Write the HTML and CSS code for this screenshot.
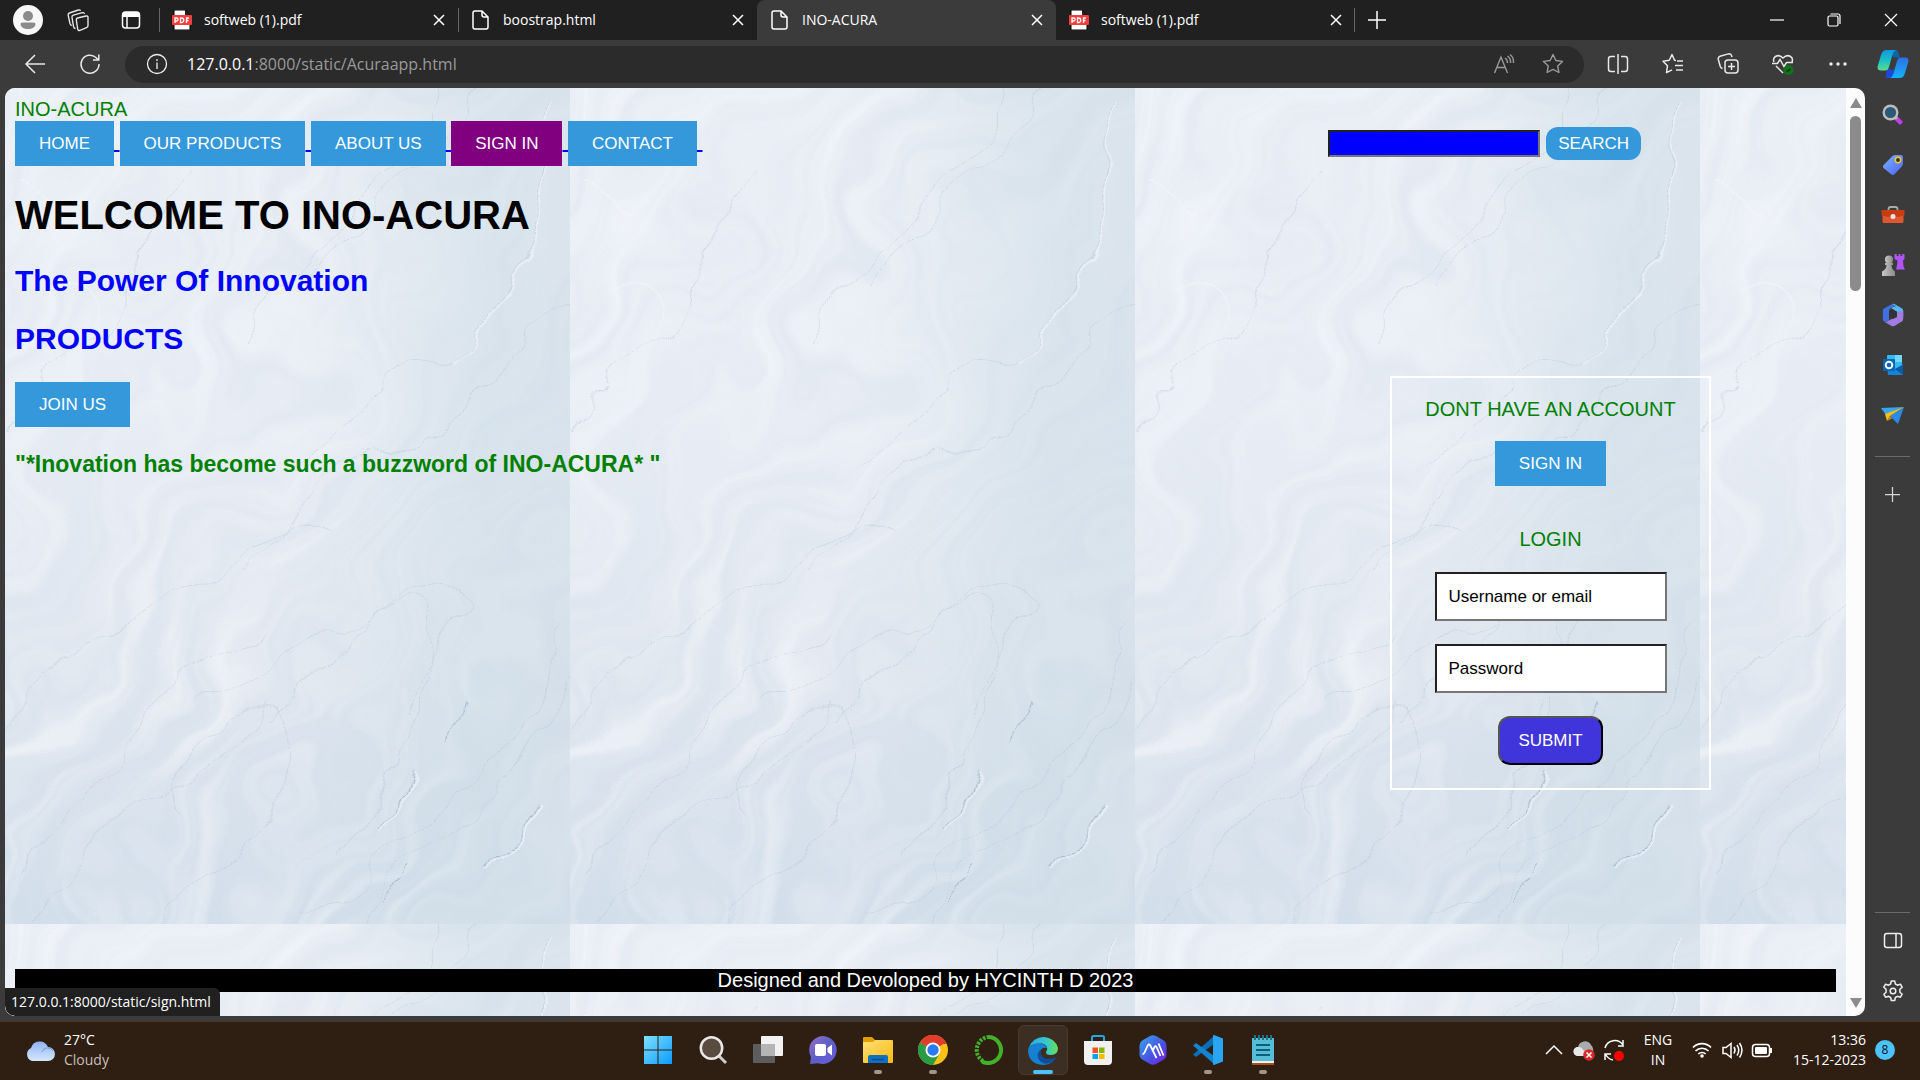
FILE: index.html
```html
<!DOCTYPE html>
<html lang="en">
<head>
<meta charset="utf-8">
<title>INO-ACURA</title>
<link rel="stylesheet" href="styles.css">
</head>
<body>
<svg class="defs" aria-hidden="true">
  <defs>
    <symbol id="i-x" viewBox="0 0 12 12"><path d="M1 1l10 10M11 1L1 11" fill="none" stroke="currentColor" stroke-width="1.5"/></symbol>
    <symbol id="i-plus" viewBox="0 0 18 18"><path d="M9 0v18M0 9h18" fill="none" stroke="currentColor" stroke-width="1.5"/></symbol>
    <symbol id="i-doc" viewBox="0 0 18 20"><path d="M3 1h7l6 6v10a2 2 0 0 1-2 2H3a2 2 0 0 1-2-2V3a2 2 0 0 1 2-2zM10 1v4a2 2 0 0 0 2 2h4" fill="none" stroke="#fff" stroke-width="1.5"/></symbol>
    <symbol id="i-pdf" viewBox="0 0 20 20"><path d="M2 0h11l5 5v15H2z" fill="#fff" stroke="#000"/><path d="M13 0v5h5z" fill="#222"/><rect y="5" width="20" height="10" rx="1" fill="#f33e3e"/><path d="M3 13V8h1.600a1.500 1.500 0 0 1 0 3H3M8.500 8h1a2.200 2.200 0 0 1 0 4.500h-1zM14.500 13V8H17M14.500 10.500h2" fill="none" stroke="#fff" stroke-width="1.300"/></symbol>
    <linearGradient id="g-cop1" x1="0" y1="0" x2="0" y2="1"><stop offset="0" stop-color="#1199dd"/><stop offset=".5" stop-color="#19bfc9"/><stop offset="1" stop-color="#5ddc8a"/></linearGradient>
    <linearGradient id="g-cop2" x1="0" y1="0" x2="0" y2="1"><stop offset="0" stop-color="#2f6fe0"/><stop offset="1" stop-color="#12b4ff"/></linearGradient>
    <linearGradient id="g-win" x1="0" y1="0" x2="1" y2="1"><stop offset="0" stop-color="#7fe0ff"/><stop offset="1" stop-color="#0a9bff"/></linearGradient>
    <linearGradient id="g-chat" x1="0" y1="0" x2="1" y2="1"><stop offset="0" stop-color="#9a6fc9"/><stop offset=".5" stop-color="#5b5fc7"/><stop offset="1" stop-color="#6b5be0"/></linearGradient>
    <linearGradient id="g-fold" x1="0" y1="0" x2="1" y2="1"><stop offset="0" stop-color="#ffe07a"/><stop offset="1" stop-color="#f9b80f"/></linearGradient>
    <linearGradient id="g-edge" x1="0" y1="0" x2="1" y2="0"><stop offset="0" stop-color="#2aa7e8"/><stop offset=".6" stop-color="#35c8d0"/><stop offset="1" stop-color="#6be04f"/></linearGradient>
    <linearGradient id="g-ai" x1="0" y1="0" x2="1" y2="1"><stop offset="0" stop-color="#35a6ee"/><stop offset=".6" stop-color="#4a4fe0"/><stop offset="1" stop-color="#7a1fe8"/></linearGradient>
    <linearGradient id="g-cloud" x1="0" y1="0" x2="0" y2="1"><stop offset="0" stop-color="#8fb4f2"/><stop offset="1" stop-color="#d6e6fc"/></linearGradient>
    <linearGradient id="g-tag" x1="0" y1="0" x2="1" y2="1"><stop offset="0" stop-color="#79b4ff"/><stop offset="1" stop-color="#5060ff"/></linearGradient>
    <linearGradient id="g-pawn" x1="0" y1="0" x2="1" y2="0"><stop offset="0" stop-color="#c8c8c8"/><stop offset="1" stop-color="#8a8a8a"/></linearGradient>
  </defs>
</svg>

<header class="tabstrip">
  <div class="strip-tools">
    <button class="icon-btn" aria-label="Profile"><svg width="30" height="30" viewBox="0 0 30 30"><circle cx="15" cy="15" r="15" fill="#f7f7f7"/><circle cx="15" cy="11" r="5" fill="#8b8b8b"/><path d="M7.500 19q0-1.500 2-1.500h11q2 0 2 1.500c0 3-3.500 5-7.500 5s-7.500-2-7.500-5z" fill="#8b8b8b"/></svg></button>
    <button class="icon-btn" aria-label="Workspaces"><svg width="22" height="24" viewBox="0 0 22 24" fill="none" stroke="#e6e6e6" stroke-width="1.400" stroke-linejoin="round"><path d="M10.500 10l8.500-2q2-.4 2 1.500v8q0 1.600-1.500 2.200L13 22.300q-2 .7-2.300-1.300L9.300 12q-.2-1.600 1.200-2z"/><path d="M8.500 20.500q-1.500 0-1.900-1.700L5 9.500Q4.700 7.700 6.400 7.200l8.800-2.500q2-.5 2.300 1.200"/><path d="M4.800 17.500q-1.300-.2-1.700-1.600L1.200 7.300Q.9 5.500 2.500 5l8.800-3q1.700-.5 2.200.8"/></svg></button>
    <button class="icon-btn" aria-label="Tab actions"><svg width="20" height="20" viewBox="0 0 20 20"><rect x="1.500" y="2" width="17" height="16" rx="3" fill="none" stroke="#fff" stroke-width="1.500"/><path d="M1.500 7V4.500Q1.500 2 4 2h12q2.500 0 2.500 2.500V7z" fill="#fff"/><path d="M6 7v11" stroke="#fff" stroke-width="1.500"/></svg></button>
  </div>
  <nav class="tabs" aria-label="Tabs">
    <div class="tab"><svg class="fav" width="20" height="20"><use href="#i-pdf"/></svg><span class="tab-title">softweb (1).pdf</span><button class="icon-btn close" aria-label="Close tab"><svg width="12" height="12"><use href="#i-x"/></svg></button></div>
    <div class="tab"><svg class="fav" width="20" height="20"><use href="#i-doc"/></svg><span class="tab-title">boostrap.html</span><button class="icon-btn close" aria-label="Close tab"><svg width="12" height="12"><use href="#i-x"/></svg></button></div>
    <div class="tab active"><svg class="fav" width="20" height="20"><use href="#i-doc"/></svg><span class="tab-title">INO-ACURA</span><button class="icon-btn close" aria-label="Close tab"><svg width="12" height="12"><use href="#i-x"/></svg></button></div>
    <div class="tab last"><svg class="fav" width="20" height="20"><use href="#i-pdf"/></svg><span class="tab-title">softweb (1).pdf</span><button class="icon-btn close" aria-label="Close tab"><svg width="12" height="12"><use href="#i-x"/></svg></button></div>
    <button class="icon-btn new-tab" aria-label="New tab"><svg width="18" height="18"><use href="#i-plus"/></svg></button>
  </nav>
  <div class="win-controls">
    <button class="icon-btn" aria-label="Minimize"><svg width="14" height="14"><path d="M0 7h14" stroke="#fff" stroke-width="1.200"/></svg></button>
    <button class="icon-btn" aria-label="Restore"><svg width="14" height="14" fill="none" stroke="#fff" stroke-width="1.200"><rect x="1" y="3" width="10" height="10" rx="1.500"/><path d="M3.500 1H11q2 0 2 2v8"/></svg></button>
    <button class="icon-btn" aria-label="Close"><svg width="14" height="14" viewBox="0 0 14 14"><path d="M1 1l12 12M13 1L1 13" stroke="#fff" stroke-width="1.200"/></svg></button>
  </div>
</header>

<div class="toolbar">
  <button class="icon-btn tool" aria-label="Back"><svg width="22" height="20" viewBox="0 0 22 20" fill="none" stroke="#e8e8e8" stroke-width="1.500"><path d="M21 10H2M11 1l-9 9 9 9"/></svg></button>
  <button class="icon-btn tool" aria-label="Refresh"><svg width="22" height="22" viewBox="0 0 22 22" fill="none" stroke="#e8e8e8" stroke-width="1.500"><path d="M20 11a9 9 0 1 1-3-6.500l2.500 2.500M19.800 1.500V7H14"/></svg></button>
  <div class="address">
    <svg width="22" height="22" viewBox="0 0 22 22" fill="none" stroke="#eee" stroke-width="1.300"><circle cx="11" cy="11" r="9.500"/><path d="M11 9.500V16M11 6v2"/></svg>
    <span class="url"><b>127.0.0.1</b>:8000/static/Acuraapp.html</span>
    <button class="icon-btn dim" aria-label="Read aloud"><svg width="22" height="22" viewBox="0 0 22 22" fill="none" stroke="#9a9a9a" stroke-width="1.400"><path d="M1.500 20L8 4l6.500 16M4 14.500h8M12 5q2.500 1.500 2.500 5M14.500 3q3.500 2.500 3 7M17 1.500q4 3 3.500 8.500"/></svg></button>
    <button class="icon-btn dim" aria-label="Favorite"><svg width="22" height="22" viewBox="0 0 22 22" fill="none" stroke="#9a9a9a" stroke-width="1.400" stroke-linejoin="round"><path d="M11 1.500l2.900 6 6.600.9-4.800 4.600 1.200 6.500L11 16.400l-5.900 3.100L6.300 13 1.500 8.400l6.600-.9z"/></svg></button>
  </div>
  <div class="tools">
    <button class="icon-btn" aria-label="Split screen"><svg width="22" height="22" viewBox="0 0 22 22" fill="none" stroke="#e8e8e8" stroke-width="1.500"><path d="M8 3.500H4Q1.500 3.500 1.500 6v10q0 2.500 2.500 2.500h4M14 3.500h4q2.500 0 2.500 2.500v10q0 2.500-2.500 2.500h-4M11 1v20"/></svg></button>
    <button class="icon-btn" aria-label="Favorites"><svg width="22" height="22" viewBox="0 0 22 22" fill="none" stroke="#e8e8e8" stroke-width="1.500" stroke-linejoin="round"><path d="M14 7.500l-1.500-.2L10 1.500 7.300 7.300 1 8.200l4.500 4.500-1 7L10 16.800M15 8h6M13 12.500h8M14 17h7"/></svg></button>
    <button class="icon-btn" aria-label="Collections"><svg width="22" height="22" viewBox="0 0 22 22" fill="none" stroke="#e8e8e8" stroke-width="1.500"><rect x="8" y="7" width="13" height="13" rx="3"/><path d="M14.500 10v7M11 13.500h7M5.500 15.500q-1.600-.3-2.200-2L1.300 6.500Q.8 4 3 3.200l8.500-2.300q2.500-.5 3.200 2l.3 1.300"/></svg></button>
    <button class="icon-btn" aria-label="Browser essentials"><svg width="22" height="22" viewBox="0 0 22 22" fill="none" stroke="#e8e8e8" stroke-width="1.500"><path d="M2 9C0 4 6 0 11 5c5-5 11-1 9 4M0 10.500h5.500L8 6.500l4 7 2.500-4H21M4 13l7 7"/><circle cx="16.500" cy="17" r="5" fill="#13731b" stroke="none"/><path d="M14.500 17l1.500 1.500 2.500-3" stroke="#0b3d10"/></svg></button>
    <button class="icon-btn" aria-label="More"><svg width="18" height="4" viewBox="0 0 18 4" fill="#eee"><circle cx="2" cy="2" r="1.700"/><circle cx="9" cy="2" r="1.700"/><circle cx="16" cy="2" r="1.700"/></svg></button>
    <button class="icon-btn" aria-label="Copilot"><svg width="32" height="28" viewBox="0 0 32 28"><path d="M19 0h-7l4 7 7 1-1.500-5Q21 0 19 0z" fill="#0b66a8"/><path d="M9 28h6l3-8-8-1-1 5q-.5 3 0 4z" fill="#1c49d8"/><path d="M20 0H9.500Q5.500 0 4.200 4.500L.7 16Q-.3 20.500 4 20.500h4q3 0 4-3.500l3.500-12.500Q17 0 20 0z" fill="url(#g-cop1)"/><path d="M12 28h10.500q4 0 5.300-4.500L31.300 12q1-4.500-3.300-4.500h-4q-3 0-4 3.500l-3.500 12.500Q15 28 12 28z" fill="url(#g-cop2)"/></svg></button>
  </div>
</div>

<div class="window">
  <div class="viewport">
    <div class="site">
      <svg class="texture" aria-hidden="true">
        <defs>
          <linearGradient id="t-v" x1="0" y1="0" x2="0" y2="1"><stop offset="0" stop-color="#ebeff6"/><stop offset=".4" stop-color="#e8edf5"/><stop offset=".7" stop-color="#dfe6ef"/><stop offset="1" stop-color="#d2deea"/></linearGradient>
          <linearGradient id="t-h" x1="0" y1="0" x2="1" y2="0"><stop offset=".5" stop-color="#cddce5" stop-opacity="0"/><stop offset=".85" stop-color="#c9dae4" stop-opacity=".5"/><stop offset="1" stop-color="#cbd9e4" stop-opacity=".5"/></linearGradient>
          <filter id="t-grain" x="0" y="0" width="100%" height="100%"><feTurbulence type="fractalNoise" baseFrequency="0.003 0.040" numOctaves="5" seed="8"/><feColorMatrix values="0 0 0 0 .64  0 0 0 0 .73  0 0 0 0 .82  1.800 0 0 0 -.72"/></filter>
          <filter id="t-light" x="0" y="0" width="100%" height="100%"><feTurbulence type="fractalNoise" baseFrequency="0.003 0.030" numOctaves="4" seed="31"/><feColorMatrix values="0 0 0 0 .94  0 0 0 0 .95  0 0 0 0 .98  2 0 0 0 -.8"/></filter>
          <filter id="t-swirl" filterUnits="userSpaceOnUse" x="-150" y="-150" width="865" height="1136"><feTurbulence type="fractalNoise" baseFrequency="0.005" numOctaves="3" seed="5" result="n"/><feDisplacementMap in="SourceGraphic" in2="n" scale="260" xChannelSelector="R" yChannelSelector="G"/></filter>
          <filter id="t-ripple" filterUnits="userSpaceOnUse" x="-50" y="-50" width="665" height="936"><feTurbulence type="fractalNoise" baseFrequency="0.012" numOctaves="3" seed="12" result="n"/><feDisplacementMap in="SourceGraphic" in2="n" scale="60" xChannelSelector="R" yChannelSelector="G"/></filter>
          <pattern id="marble" width="565" height="836" patternUnits="userSpaceOnUse">
            <rect width="565" height="836" fill="url(#t-v)"/>
            <g filter="url(#t-swirl)">
              <g transform="rotate(-56 282 418)">
                <rect x="-450" y="-250" width="1470" height="1350" filter="url(#t-grain)" opacity=".4"/>
                <rect x="-450" y="-250" width="1470" height="1350" filter="url(#t-light)" opacity=".6"/>
              </g>
            </g>
            <rect width="565" height="836" fill="url(#t-h)"/>
            <g filter="url(#t-ripple)">
              <g fill="none" stroke="#a3b8cb" opacity=".32">
                <path d="M440 0c-20 70-70 80-110 130S270 200 240 260"/>
                <path d="M485 0c-25 60-60 60-95 95s-70 50-90 110"/>
                <path d="M546 0c-12 60 5 110-22 160s-40 90-90 110-100 90-140 110"/>
                <path d="M565 215c-50 20-60 70-100 90s-40 60-100 70-60 80-130 110"/>
                <path d="M265 640c80-50 60-120 130-130s40 60 20 110-60 100-80 150"/>
                <path d="M180 740c-30-60 20-100 70-110s50 40 20 90-80 70-120 116"/>
                <path d="M405 620c30-70 90-70 50-110s-90 20-140 40-60 60-130 70"/>
                <path d="M565 550c-50 60-60 120-120 160s-60 80-150 126"/>
                <path d="M565 590c-50 60-60 120-120 160s-60 60-100 86"/>
                <path d="M0 640c50-70 110-80 160-130s120-50 170-80"/>
                <path d="M0 780c60-80 90-70 130-140s90-80 130-90"/>
                <path d="M0 340c40-60 90-70 110-130s60-70 90-140"/>
                <path d="M20 836c40-60 50-80 110-110s90-40 130-100"/>
              </g>
              <g fill="none" stroke="#8fa9c1" opacity=".6">
                <path d="M480 790c12-20 40-40 55-75"/><path d="M365 740c5-16 25-24 30-50"/><path d="M445 650c12-20 20-22 28-44"/><path d="M375 817c12-12 30-6 42-30"/>
              </g>
              <g fill="none" stroke="#f6f8fc" opacity=".5" stroke-width="2">
                <path d="M482 791c12-20 40-40 55-75"/><path d="M12 90c24 0 30 25 54 30M30 210c15-20 60-20 50 10"/>
                <path d="M548 0c-12 60 5 110-22 160s-40 90-90 110"/><path d="M367 741c5-16 25-24 30-50"/>
              </g>
            </g>
          </pattern>
        </defs>
        <rect width="100%" height="100%" fill="url(#marble)"/>
      </svg>

      <div class="brand">INO-ACURA</div>
      <div class="topbar">
        <nav class="menu" aria-label="Site"><a href="#"><span class="btn">HOME</span>&nbsp;</a><a href="#"><span class="btn">OUR PRODUCTS</span>&nbsp;</a><a href="#"><span class="btn">ABOUT US</span>&nbsp;</a><a href="#"><span class="btn hover">SIGN IN</span>&nbsp;</a><a href="#"><span class="btn">CONTACT</span>&nbsp;</a></nav>
        <form class="search"><input type="text" class="search-box" aria-label="Search"><button type="button" class="search-btn">SEARCH</button></form>
      </div>

      <div class="main">
        <section class="intro">
          <h1>WELCOME TO INO-ACURA</h1>
          <h2>The Power Of Innovation</h2>
          <h2>PRODUCTS</h2>
          <button class="btn">JOIN US</button>
          <h3>"*Inovation has become such a buzzword of INO-ACURA* "</h3>
        </section>
        <form class="card">
          <p>DONT HAVE AN ACCOUNT</p>
          <button type="button" class="btn">SIGN IN</button>
          <p class="login">LOGIN</p>
          <input type="text" class="field" placeholder="Username or email" aria-label="Username or email">
          <input type="password" class="field" placeholder="Password" aria-label="Password">
          <button type="button" class="submit">SUBMIT</button>
        </form>
      </div>
      <footer class="foot">Designed and Devoloped by HYCINTH D 2023</footer>
    </div>
    <div class="scrollbar">
      <svg width="12" height="10"><path d="M6 0l6 10H0z" fill="#8b8b8b"/></svg>
      <div class="track"><div class="thumb"></div></div>
      <svg width="12" height="10"><path d="M0 0h12L6 10z" fill="#8b8b8b"/></svg>
    </div>
    <div class="status">127.0.0.1:8000/static/sign.html</div>
  </div>

  <aside class="sidebar">
    <div class="side-group">
      <button class="icon-btn" aria-label="Search"><svg width="22" height="22" viewBox="0 0 22 22"><path d="M13.500 13.500l6 6" stroke="#c23df0" stroke-width="4.500"/><path d="M12 12l3 3" stroke="#aaa" stroke-width="3"/><circle cx="8.500" cy="8.500" r="6.800" fill="#2a5a78" stroke="#bcbcbc" stroke-width="2.400"/></svg></button>
      <button class="icon-btn" aria-label="Shopping"><svg width="22" height="22" viewBox="0 0 22 22"><path d="M10 2.500Q11 1 13 1h6q2 0 2 2v6q0 2-1 3.200l-7.500 8q-1.500 1.500-3 .2L1.500 14q-1.200-1.300-.1-2.800z" fill="url(#g-tag)"/><circle cx="16" cy="6" r="2.700" fill="#333" stroke="#f5ca19" stroke-width="1.500"/></svg></button>
      <button class="icon-btn" aria-label="Tools"><svg width="24" height="22" viewBox="0 0 24 22"><path d="M7.500 7V5q0-2 2-2h5q2 0 2 2v2" fill="none" stroke="#aaa" stroke-width="1.800"/><rect x="1.500" y="7" width="21" height="12" rx="1.500" fill="#e0582f"/><path d="M.5 6h23v5.500q-11 3-23 0z" fill="#c93d12"/><circle cx="12" cy="12.500" r="2.500" fill="#e8e8e8"/></svg></button>
      <button class="icon-btn" aria-label="Games"><svg width="24" height="24" viewBox="0 0 24 24"><path d="M13.500 1h2.200v2h1.800V1h2v2h1.700V1h2.300v5l-1.500 1.500.5 6 1.500 3h-9l1-4 .5-5-3-1.500z" fill="#b055f5"/><circle cx="8" cy="6.500" r="4" fill="url(#g-pawn)"/><path d="M4 10h8v2h-1.500q0 4 3.500 6.500V23H1v-4.500Q5.500 16 5.500 12H4z" fill="url(#g-pawn)"/></svg></button>
      <button class="icon-btn" aria-label="Microsoft 365"><svg width="22" height="24" viewBox="0 0 22 24"><path d="M10 1L2 5.500Q.8 6.300.8 8v8q0 2 1.500 2.500 2 .5 4.700-1V8q0-2 2-3l5-2.500z" fill="#3f6fe0"/><path d="M10 1q1.500-.7 3 .2L20 5.500q1.200.8 1.200 2.500v6q-1-2.500-3.500-3.500L9 5l5-2z" fill="#55b8f0"/><path d="M21.200 8v8q0 1.500-1.400 2.500L12.500 23q-1.500.7-3 0L2 18.500q2.500.8 5-1l7-4V9z" fill="#a07be0"/><path d="M7 9l3-3 5 3v5l-4 2-4-2z" fill="#333"/></svg></button>
      <button class="icon-btn" aria-label="Outlook"><svg width="22" height="22" viewBox="0 0 22 22"><rect x="5" y="1" width="15" height="14" rx="1" fill="#35b8f1"/><path d="M13 1h7v7h-7z" fill="#6fd8fb"/><path d="M5 10l8 5 8-5v10q0 1-1 1H6z" fill="#1683d8"/><path d="M21 11v10l-8-6z" fill="#0a5aa5"/><rect x="1" y="5" width="12" height="12" rx="1" fill="#0a64b8"/><circle cx="7" cy="11" r="3.300" fill="none" stroke="#fff" stroke-width="1.900"/></svg></button>
      <button class="icon-btn" aria-label="Drop"><svg width="24" height="20" viewBox="0 0 24 20"><path d="M0 3L23 2 5 10z" fill="#37a6f0"/><path d="M23 2L9 11l8 8z" fill="#2b8be8"/><path d="M23 2L4 9l2 7 3-5z" fill="#f6bd1b"/><path d="M6 16l3-5 2 2.500z" fill="#c98a0a"/></svg></button>
      <hr>
      <button class="icon-btn plus" aria-label="Add"><svg width="15" height="15" viewBox="0 0 18 18"><use href="#i-plus" width="18" height="18"/></svg></button>
    </div>
    <div class="side-group bottom">
      <hr>
      <button class="icon-btn" aria-label="Hide sidebar"><svg width="20" height="18" viewBox="0 0 20 18" fill="none" stroke="#eee" stroke-width="1.500"><rect x="1.500" y="1.500" width="17" height="14" rx="2.500"/><path d="M13 1.500v14"/></svg></button>
      <button class="icon-btn" aria-label="Settings"><svg width="22" height="22" viewBox="0 0 22 22" fill="none" stroke="#eee" stroke-width="1.500" stroke-linejoin="round"><circle cx="11" cy="11" r="2.800"/><path d="M9.300 1h3.400l.7 3 2 1.200 3-1 1.800 3-2.300 2.100v2.900l2.300 2-1.800 3-3-.9-2 1.200-.7 3H9.300l-.7-3-2-1.200-3 .9-1.800-3 2.300-2V9.300L1.800 7.200l1.800-3 3 1 2-1.200z"/></svg></button>
    </div>
  </aside>
</div>

<footer class="taskbar">
  <div class="weather">
    <svg width="30" height="24" viewBox="0 0 30 24"><path d="M7 23a7 7 0 0 1-1-13 9 9 0 0 1 17-1 7 7 0 0 1 0 14z" fill="url(#g-cloud)"/><path d="M17 14a6 6 0 0 1 11-1" fill="none" stroke="#6f9bea"/></svg>
    <div><div>27°C</div><div class="soft">Cloudy</div></div>
  </div>
  <div class="apps">
    <button class="app" aria-label="Start"><svg width="30" height="30" viewBox="0 0 30 30" fill="url(#g-win)"><path d="M1 1h13.500v13.500H1zM15.500 1H29v13.500H15.500zM1 15.500h13.500V29H1zM15.500 15.500H29V29H15.500z"/></svg></button>
    <button class="app" aria-label="Search"><svg width="30" height="30" viewBox="0 0 30 30"><path d="M21 21l7 7" stroke="#ccc" stroke-width="3"/><circle cx="13.500" cy="13" r="10.700" fill="#594b40" stroke="#e8e8e8" stroke-width="2.500"/></svg></button>
    <button class="app" aria-label="Task view"><svg width="30" height="30" viewBox="0 0 30 30"><rect x="8" y="1" width="22" height="20" rx="1" fill="#f2f2f2"/><rect y="9" width="22" height="19" rx="1" fill="#5d5d5d"/><rect x="8" y="9" width="14" height="12" fill="#b5b5b5"/></svg></button>
    <button class="app" aria-label="Chat"><svg width="30" height="30" viewBox="0 0 30 30"><path d="M15 1a14 14 0 1 1-5 27.200L2 29l1-7A14 14 0 0 1 15 1z" fill="url(#g-chat)"/><rect x="7" y="9" width="11" height="12" rx="2" fill="#fff"/><path d="M19.500 13l4.500-3.500v11L19.500 17z" fill="#fff"/></svg></button>
    <button class="app run" aria-label="File Explorer"><svg width="30" height="30" viewBox="0 0 30 30"><path d="M0 3q0-1 1-1h8l3 3v8H0z" fill="#e0a100"/><path d="M0 7h10l2-2h17q1 0 1 1v21q0 1-1 1H1q-1 0-1-1z" fill="url(#g-fold)"/><path d="M5 28v-6q0-2 2-2h16q2 0 2 2v6z" fill="#0f6fc0"/><path d="M9 24.500h12" stroke="#0a4f92" stroke-width="1.500"/></svg></button>
    <button class="app run" aria-label="Chrome"><svg width="30" height="30" viewBox="0 0 30 30"><circle cx="15" cy="15" r="15" fill="#fbc116"/><path d="M15 15L2 7.500A15 15 0 0 1 28 7.500z" fill="#e33b2e"/><path d="M15 15L2 7.500A15 15 0 0 0 15 30l6.500-11.300z" fill="#2a9a45"/><path d="M15 7.500h13V9H15z" fill="#e33b2e"/><circle cx="15" cy="15" r="7.500" fill="#fff"/><circle cx="15" cy="15" r="5.700" fill="#2b7bf0"/></svg></button>
    <button class="app" aria-label="Anaconda"><svg width="30" height="30" viewBox="0 0 30 30" fill="none"><path d="M15 2a13 13 0 1 1-6 24.500" stroke="#43b02a" stroke-width="4"/><path d="M10 26A13 13 0 0 1 15 2" stroke="#43b02a" stroke-width="4" stroke-dasharray="2.500 1.300"/></svg></button>
    <button class="app current" aria-label="Edge"><svg width="30" height="30" viewBox="0 0 30 30"><path d="M1 12A15 14 0 0 1 30 13q0 7-7 7-5 0-5-2.500c0-1.500 1.200-1.500 1.200-4 0-3-3-5-7.200-5Q5 8.500 1 12z" fill="url(#g-edge)"/><path d="M1 12Q5 8 11 8.500q7 0 8.200 4.500-7-1-7 5 0 9 13 8-4 4-10.500 4Q1 29 0 16q0-2 1-4z" fill="#1581d0"/><path d="M12.500 14.500q-6 6 0 12 6 5 13.500-1 3-3 1-3-9 4-13.500-2-1.500-3-1-6z" fill="#0d4f9c"/></svg></button>
    <button class="app" aria-label="Store"><svg width="30" height="30" viewBox="0 0 30 30"><path d="M9 7V2.500Q9 1 10.500 1h9Q21 1 21 2.500V7" fill="none" stroke="#27a4e8" stroke-width="2"/><path d="M1 6h28v20q0 4-4 4H5q-4 0-4-4z" fill="#f1f1f1"/><path d="M9.500 12.500H15V18H9.500z" fill="#f25022"/><path d="M16 12.500h5.500V18H16z" fill="#7fba00"/><path d="M9.500 19H15v5H9.500z" fill="#00a4ef"/><path d="M16 19h5.500v5H16z" fill="#ffb900"/></svg></button>
    <button class="app" aria-label="Assistant"><svg width="30" height="30" viewBox="0 0 30 30"><path d="M12 1q3-1.500 6 0l7 4q3.500 2 3.500 6v8q0 4-3.500 6l-7 4q-3 1.500-6 0l-7-4q-3.500-2-3.500-6v-8q0-4 3.500-6z" fill="url(#g-ai)"/><path d="M4.500 19.500Q6 19 7 16.500l2.700-6q1.300-2 2.600 0L18.500 23M14.500 16.500l2-4.500q1-1.500 2 0l4 9M20.500 8.500l5 12" fill="none" stroke="#fff" stroke-width="1.800"/></svg></button>
    <button class="app run" aria-label="VS Code"><svg width="30" height="30" viewBox="0 0 30 30"><path d="M21 1v8L3 22l-3-2.500z" fill="#0a6fb8"/><path d="M3 8L0 10.500 21 29v-8z" fill="#1584d0"/><path d="M21 0l9 3.500v23L21 30q-1 0-1-1V1q0-1 1-1z" fill="#2aa5f2"/></svg></button>
    <button class="app run" aria-label="Notepad"><svg width="30" height="30" viewBox="0 0 30 30"><rect x="4" y="25" width="22" height="5" fill="#a8501a"/><rect x="4" y="24" width="22" height="4" fill="#eee"/><path d="M4 3h22v23H4z" fill="#55bdd8"/><path d="M7 0v5M11 0v5M15 0v5M19 0v5M23 0v5" stroke="#1d7288" stroke-width="2"/><path d="M8 10h14M8 15h14M8 20h14" stroke="#0f5e78" stroke-width="2"/></svg></button>
  </div>
  <div class="tray">
    <svg width="30" height="30" viewBox="0 0 30 30" fill="none" stroke="#fff" stroke-width="1.500"><path d="M7 19l8-8 8 8"/></svg>
    <svg width="30" height="30" viewBox="0 0 30 30"><path d="M9 21a4.500 4.500 0 0 1 0-9A7 7 0 0 1 22 10q3 2 2 11z" fill="#aaa"/><path d="M9 21a4.500 4.500 0 0 1 0-9q5-1 8 9z" fill="#e8e8e8"/><circle cx="20" cy="20" r="5.800" fill="#d4282d"/><path d="M17.500 17.500l5 5M22.500 17.500l-5 5" stroke="#fff" stroke-width="1.500"/></svg>
    <svg width="30" height="30" viewBox="0 0 30 30" fill="none" stroke="#fff" stroke-width="1.500"><path d="M6 13a10 10 0 0 1 18-3V5M24 11h-5M14 25a10 10 0 0 1-7-5M6 25v-6h6"/><circle cx="20" cy="21" r="5" fill="#f00" stroke="none"/></svg>
    <div class="lang"><div>ENG</div><div>IN</div></div>
    <svg width="30" height="30" viewBox="0 0 30 30" fill="none" stroke="#fff" stroke-width="1.600"><path d="M6 12.500a12.500 12.500 0 0 1 18 0M8.500 16a9 9 0 0 1 13 0M11.300 19a5.200 5.200 0 0 1 7.400 0"/><circle cx="15" cy="21" r="1.800" fill="#fff" stroke="none"/></svg>
    <svg width="30" height="30" viewBox="0 0 30 30" fill="none" stroke="#fff" stroke-width="1.500"><path d="M6 12.500h3l5-4v14l-5-4H6zM17 12q2 3 0 6.500M20 10q3.500 5 0 10.500M22.500 8q5 7 0 14.500"/></svg>
    <svg width="30" height="30" viewBox="0 0 30 30"><rect x="5.500" y="9.500" width="17" height="12" rx="3" fill="none" stroke="#fff" stroke-width="1.500"/><rect x="8" y="12" width="12" height="7" rx="1" fill="#fff"/><path d="M24 13v5" stroke="#fff" stroke-width="2"/></svg>
    <div class="clock"><div>13:36</div><div>15-12-2023</div></div>
    <span class="badge">8</span>
  </div>
</footer>
</body>
</html>
```
FILE: styles.css
```css
* { box-sizing: border-box; }
html, body { height: 100%; }
body {
  margin: 0;
  display: flex;
  flex-direction: column;
  overflow: hidden;
  background: #3b3b3b;
  color: #fff;
  font: 14px/20px "Open Sans", "Noto Sans", sans-serif;
}
svg { display: block; flex: none; }
.defs { position: absolute; width: 0; height: 0; }
button, input { font-family: inherit; margin: 0; }
.icon-btn {
  border: 0;
  padding: 0;
  background: none;
  color: #fff;
  display: flex;
  align-items: center;
  justify-content: center;
}

/* tab strip */
.tabstrip { display: flex; height: 40px; background: #202020; flex: none; }
.strip-tools { display: flex; align-items: center; gap: 24px; width: 159px; padding-left: 13px; flex: none; }
.strip-tools .icon-btn + .icon-btn + .icon-btn { margin-left: 8px; }
.tabs { display: flex; flex: 1; min-width: 0; }
.tab {
  display: flex;
  align-items: center;
  flex: 0 1 299px;
  min-width: 0;
  padding: 0 13px;
  gap: 12px;
  background: linear-gradient(#666, #666) left center / 1px 24px no-repeat;
}
.tab.active { background: #3b3b3b; border-radius: 8px 8px 0 0; }
.tab.last { background: linear-gradient(#666, #666) right center / 1px 24px no-repeat; }
.tab-title { flex: 1; white-space: nowrap; overflow: hidden; }
.new-tab { width: 44px; }
.win-controls { display: flex; flex: none; padding-right: 1px; }
.win-controls .icon-btn { width: 57px; }

/* toolbar */
.toolbar { display: flex; align-items: center; height: 48px; padding-left: 7px; flex: none; }
.tool { width: 55px; height: 38px; }
.address {
  display: flex;
  align-items: center;
  flex: 1;
  height: 37px;
  margin-left: 8px;
  padding: 0 20px;
  border-radius: 19px;
  background: #2b2b2b;
}
.address > svg { margin: 0 19px 0 1px; }
.url { flex: 1; color: #9a9a9a; font-size: 16px; }
.url b { font-weight: 400; color: #fff; }
.dim { margin-left: 27px; }
.tools { display: flex; padding-left: 6px; }
.tools .icon-btn { width: 55px; height: 38px; }

/* window body */
.window { display: flex; flex: 1; min-height: 0; padding: 0 0 5px 5px; }
.viewport {
  position: relative;
  display: flex;
  flex: 1;
  min-width: 0;
  overflow: hidden;
  border-radius: 10px;
  background: #fcfcfc;
}
.site {
  position: relative;
  isolation: isolate;
  flex: 1;
  min-width: 0;
  padding: 10px;
  color: #000;
  font: 20px/23px Arial, "Liberation Sans", sans-serif;
}
.texture { position: absolute; inset: 0; width: 100%; height: 100%; z-index: -1; }
.brand { color: green; }
.topbar { display: flex; justify-content: space-between; align-items: center; padding-right: 195px; }
.menu { white-space: nowrap; }
.menu a { color: #00f; text-decoration: underline; text-decoration-thickness: 2px; }
.btn {
  display: inline-block;
  height: 45px;
  padding: 0 24px;
  border: 0;
  background: #3498db;
  color: #fff;
  font-size: 17px;
  line-height: 45px;
}
.btn.hover { background: purple; }
.search { display: flex; align-items: center; gap: 6px; }
.search-box { width: 212px; height: 27px; border: 2px inset #767676; background: #00f; }
.search-btn {
  height: 33px;
  padding: 0 12px;
  border: 0;
  border-radius: 12px;
  background: #3498db;
  color: #fff;
  font-size: 17px;
}
.main { display: flex; justify-content: space-between; align-items: flex-start; padding-right: 125px; }
h1, h2, h3 { margin: 0; }
h1 { margin: 26px 0; font-size: 40px; line-height: 46px; }
h2 { margin-bottom: 24px; font-size: 30px; line-height: 34px; color: #00f; }
h3 { margin-top: 24px; font-size: 23px; line-height: 27px; color: green; }
.intro .btn { display: block; margin-top: 26px; }
.card {
  display: flex;
  flex-direction: column;
  align-items: center;
  width: 321px;
  margin-top: 210px;
  padding: 20px 0 23px;
  border: 2px solid #fff;
  color: green;
}
.card p { margin: 0 0 20px; }
.card .login { margin: 42px 0 21px; }
.field {
  width: 232px;
  height: 49px;
  margin-bottom: 23px;
  padding: 0 12px;
  border: 2px inset #767676;
  background: #fff;
  font-size: 17px;
}
.field::placeholder { color: #000; opacity: 1; }
.submit {
  height: 49px;
  padding: 0 18px;
  border: 2px outset #000;
  border-radius: 12px;
  background: #4034db;
  color: #fff;
  font-size: 17px;
}
.foot { margin-top: 179px; background: #000; color: #fff; text-align: center; }

.scrollbar {
  display: flex;
  flex-direction: column;
  align-items: center;
  width: 19px;
  padding: 10px 0 8px;
}
.track { flex: 1; padding: 8px 0; }
.thumb { width: 11px; height: 20%; border-radius: 6px; background: #8b8b8b; }
.status {
  position: absolute;
  left: 0;
  bottom: 0;
  padding: 4px 9px 4px 6px;
  border-radius: 0 6px 0 10px;
  background: #202020;
}

/* sidebar */
.sidebar { display: flex; flex-direction: column; justify-content: space-between; width: 55px; padding-top: 2px; }
.side-group { display: flex; flex-direction: column; align-items: center; }
.side-group .icon-btn { width: 50px; height: 50px; }
.side-group hr { width: 35px; height: 1px; margin: 16px 0 12px; border: 0; background: #6b6b6b; }
.side-group.bottom hr { margin: 0 0 3px; }
.plus { opacity: .8; }

/* taskbar */
.taskbar {
  display: grid;
  grid-template-columns: 1fr auto 1fr;
  align-items: center;
  height: 59px;
  padding: 0 25px 2px;
  background: #2f1f13;
  border-top: 1px solid #45362b;
  flex: none;
}
.weather { display: flex; align-items: center; gap: 9px; }
.soft { color: #c5bfba; }
.apps { display: flex; gap: 5px; }
.app {
  position: relative;
  display: flex;
  align-items: center;
  justify-content: center;
  width: 50px;
  height: 50px;
  padding: 0;
  border: 1px solid transparent;
  border-radius: 6px;
  background: none;
}
.app.current { background: #3d2e23; border-color: #483a30; }
.app.run::after, .app.current::after {
  content: "";
  position: absolute;
  bottom: 0;
  left: 50%;
  width: 8px;
  height: 4px;
  border-radius: 2px;
  background: #a0968e;
  transform: translateX(-50%);
}
.app.current::after { width: 20px; background: #4cc2ff; }
.tray { display: flex; align-items: center; justify-content: flex-end; }
.lang { width: 58px; text-align: center; }
.clock { width: 89px; text-align: right; }
.badge {
  width: 20px;
  height: 20px;
  margin-left: 9px;
  border-radius: 50%;
  background: #4cc2ff;
  color: #111;
  font-size: 12px;
  text-align: center;
}
```
